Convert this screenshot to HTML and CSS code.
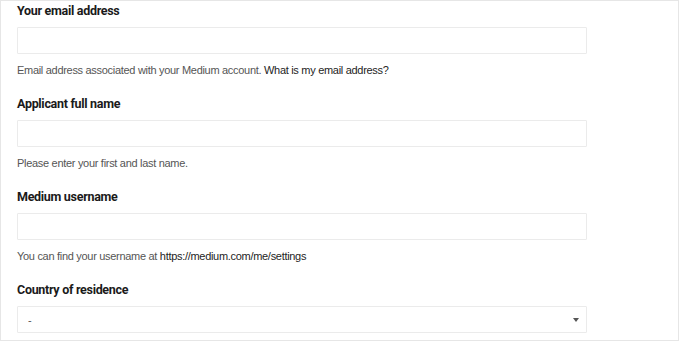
FILE: index.html
```html
<!DOCTYPE html>
<html lang="en">
<head>
    <meta charset="UTF-8">
    <meta name="viewport" content="width=device-width, initial-scale=1.0">
    <title>Medium Application</title>
    <link rel="stylesheet" href="styles.css">
</head>
<body>
    <div class="form-card">
        <form class="apply-form">
            <div class="form-group">
                <label for="email" class="form-label">Your email address</label>
                <input type="email" id="email" class="form-control">
                <p class="form-help">Email address associated with your Medium account. <a href="#" class="help-link">What is my email address?</a></p>
            </div>

            <div class="form-group">
                <label for="fullName" class="form-label">Applicant full name</label>
                <input type="text" id="fullName" class="form-control">
                <p class="form-help">Please enter your first and last name.</p>
            </div>

            <div class="form-group">
                <label for="username" class="form-label">Medium username</label>
                <input type="text" id="username" class="form-control">
                <p class="form-help">You can find your username at <span class="help-link">https://medium.com/me/settings</span></p>
            </div>

            <div class="form-group">
                <label for="country" class="form-label">Country of residence</label>
                <div class="select-wrap">
                    <select id="country" class="form-control form-select">
                        <option>-</option>
                    </select>
                </div>
            </div>
        </form>
    </div>
</body>
</html>
```

FILE: styles.css
```css
* {
    box-sizing: border-box;
}

body {
    margin: 0;
    background-color: #fff;
    font-family: "Liberation Sans", Arial, sans-serif;
    color: #242424;
}

.form-card {
    width: 679px;
    height: 341px;
    border: 1px solid #e6e6e6;
    overflow: hidden;
    padding: 2px 16px 0;
}

.form-group {
    margin-bottom: 19px;
}

.form-label {
    display: block;
    font-family: Roboto, "Liberation Sans", sans-serif;
    font-size: 12.5px;
    font-weight: 700;
    line-height: 16px;
    letter-spacing: -0.3px;
    margin-bottom: 8px;
    color: #1a1a1a;
}

.form-control {
    display: block;
    width: 570px;
    height: 27px;
    border: 1px solid #ebebeb;
    border-radius: 1px;
    background: #fff;
    font-family: inherit;
    font-size: 11px;
    color: #242424;
    padding: 0 10px;
    outline: none;
}

.form-help {
    margin: 9px 0 0;
    font-size: 11px;
    line-height: 14px;
    color: #555;
    letter-spacing: -0.3px;
}

.help-link {
    color: #242424;
    text-decoration: none;
}

.select-wrap {
    position: relative;
    width: 570px;
}

.form-select {
    appearance: none;
    -webkit-appearance: none;
    color: #555;
}

.select-wrap::after {
    content: "";
    position: absolute;
    right: 8px;
    top: 12px;
    border-left: 3.5px solid transparent;
    border-right: 3.5px solid transparent;
    border-top: 4px solid #555;
}
```
